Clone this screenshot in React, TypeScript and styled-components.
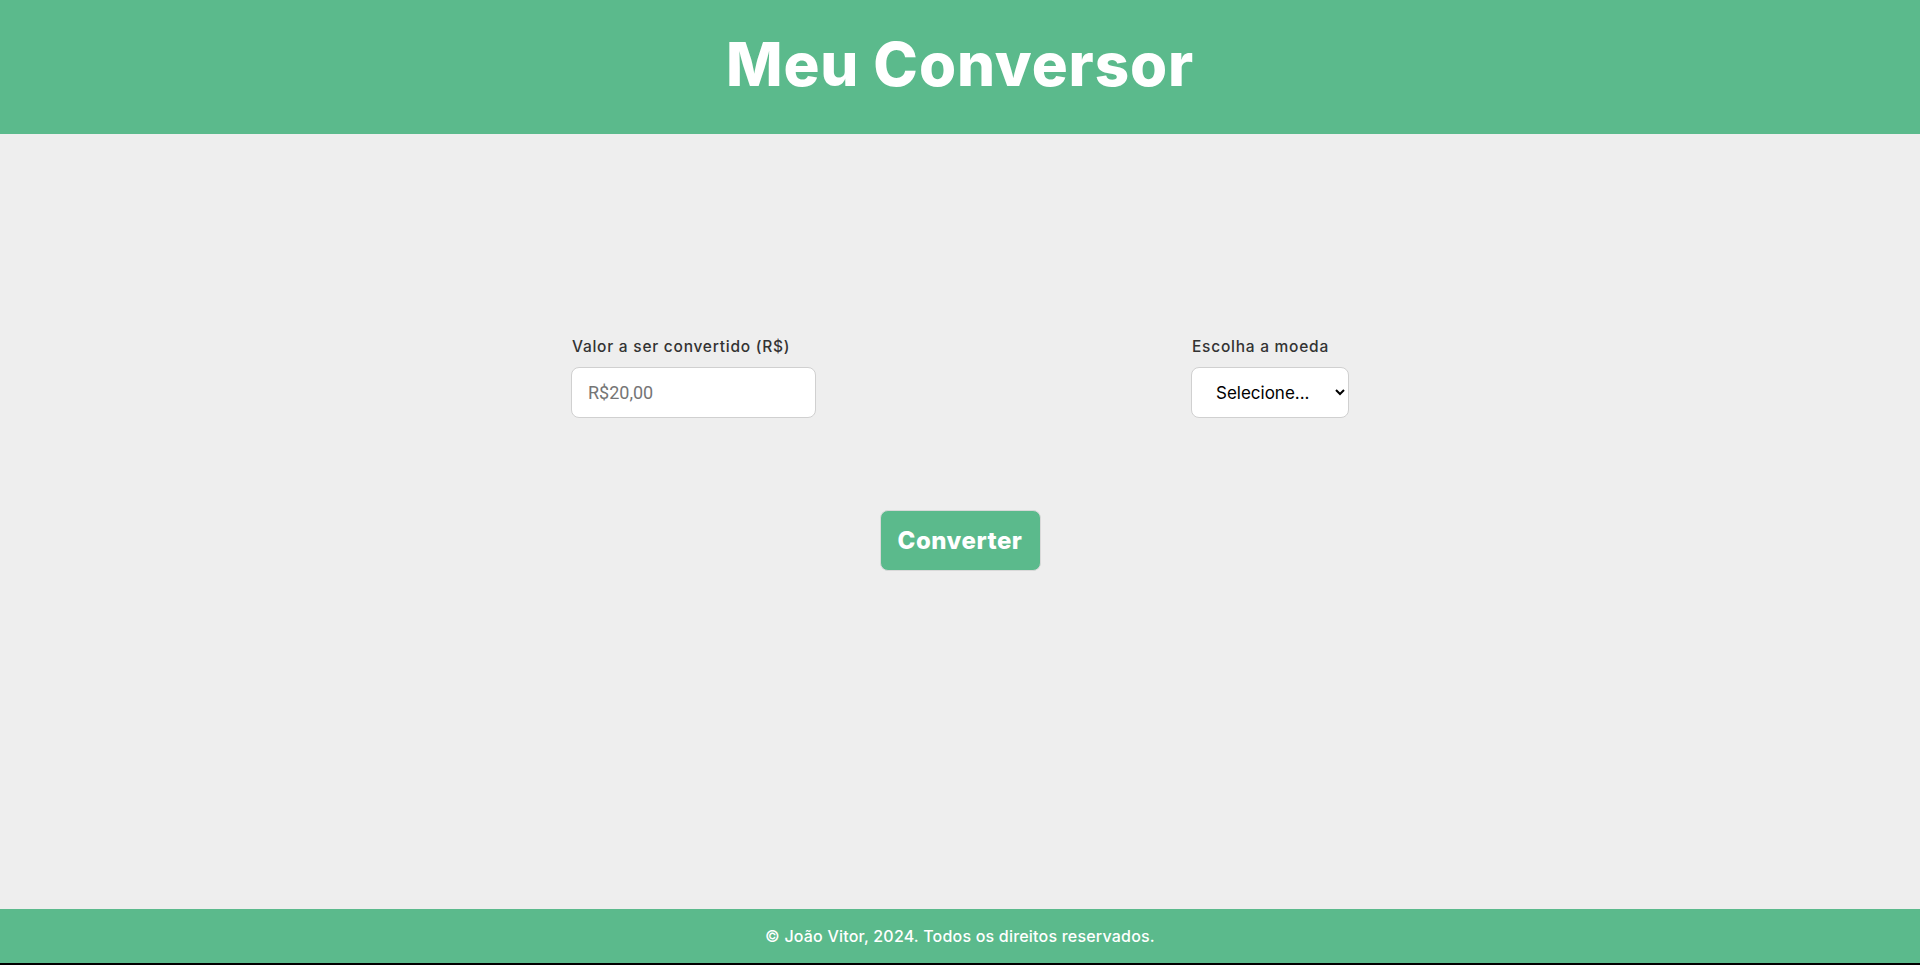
import React from "react";
import styled, { createGlobalStyle } from "styled-components";

const Global = createGlobalStyle`
  html, body { margin: 0; padding: 0; }
  body { background: #eeeeee; font-family: Inter, "Noto Sans", sans-serif; }
  * { box-sizing: border-box; }
`;

const green = "#5bba8c";

const Page = styled.div`
  min-height: 100vh;
  display: flex;
  flex-direction: column;
  border-bottom: 2px solid #000;
`;

const Header = styled.header`
  height: 134px;
  background: ${green};
  display: flex;
  align-items: center;
  justify-content: center;
  padding-bottom: 6px;
`;

const Title = styled.h1`
  margin: 0;
  color: #fff;
  font-family: Inter, sans-serif;
  font-weight: 800;
  font-size: 60px;
  letter-spacing: 0.9px;
`;

const Main = styled.main`
  flex: 1;
  display: flex;
  flex-direction: column;
  align-items: center;
  padding-top: 200px;
`;

const Row = styled.div`
  width: 778px;
  display: flex;
  justify-content: space-between;
`;

const Field = styled.div`
  display: flex;
  flex-direction: column;
  gap: 7px;
`;

const Label = styled.label`
  font-family: Inter, sans-serif;
  font-weight: 500;
  font-size: 15.5px;
  letter-spacing: 0.75px;
  line-height: 26px;
  color: #333;
  padding-left: 1px;
`;

const Input = styled.input`
  width: 245px;
  height: 51px;
  border: 1.5px solid #d0d0d0;
  border-radius: 8px;
  background: #fff;
  padding: 0 16px;
  font-family: Roboto, sans-serif;
  font-size: 18px;
  outline: none;
  &::placeholder { color: #757575; }
`;

const Select = styled.select`
  width: 158px;
  height: 51px;
  border: 1.5px solid #d0d0d0;
  border-radius: 8px;
  background: #fff;
  padding: 0 8px 0 20px;
  font-family: Inter, sans-serif;
  font-size: 17px;
  color: #000;
  outline: none;
`;

const Button = styled.button`
  margin-top: 92px;
  width: 161px;
  height: 61px;
  border: 1.5px solid #d9d9d9;
  border-radius: 8px;
  background: ${green};
  color: #fff;
  font-family: Inter, sans-serif;
  font-weight: 800;
  font-size: 24px;
  letter-spacing: 0.5px;
  cursor: pointer;
`;

const Footer = styled.footer`
  height: 54px;
  background: ${green};
  display: flex;
  align-items: center;
  justify-content: center;
  color: #fff;
  font-family: Inter, sans-serif;
  font-weight: 500;
  font-size: 16px;
  letter-spacing: 0.2px;
`;

export default function App() {
  return (
    <>
      <Global />
      <Page>
        <Header>
          <Title>Meu Conversor</Title>
        </Header>
        <Main>
          <Row>
            <Field>
              <Label htmlFor="valor">Valor a ser convertido (R$)</Label>
              <Input id="valor" placeholder="R$20,00" />
            </Field>
            <Field>
              <Label htmlFor="moeda">Escolha a moeda</Label>
              <Select id="moeda" defaultValue="">
                <option value="">Selecione...</option>
                <option value="USD">Dólar</option>
                <option value="EUR">Euro</option>
              </Select>
            </Field>
          </Row>
          <Button>Converter</Button>
        </Main>
        <Footer>© João Vitor, 2024. Todos os direitos reservados.</Footer>
      </Page>
    </>
  );
}
